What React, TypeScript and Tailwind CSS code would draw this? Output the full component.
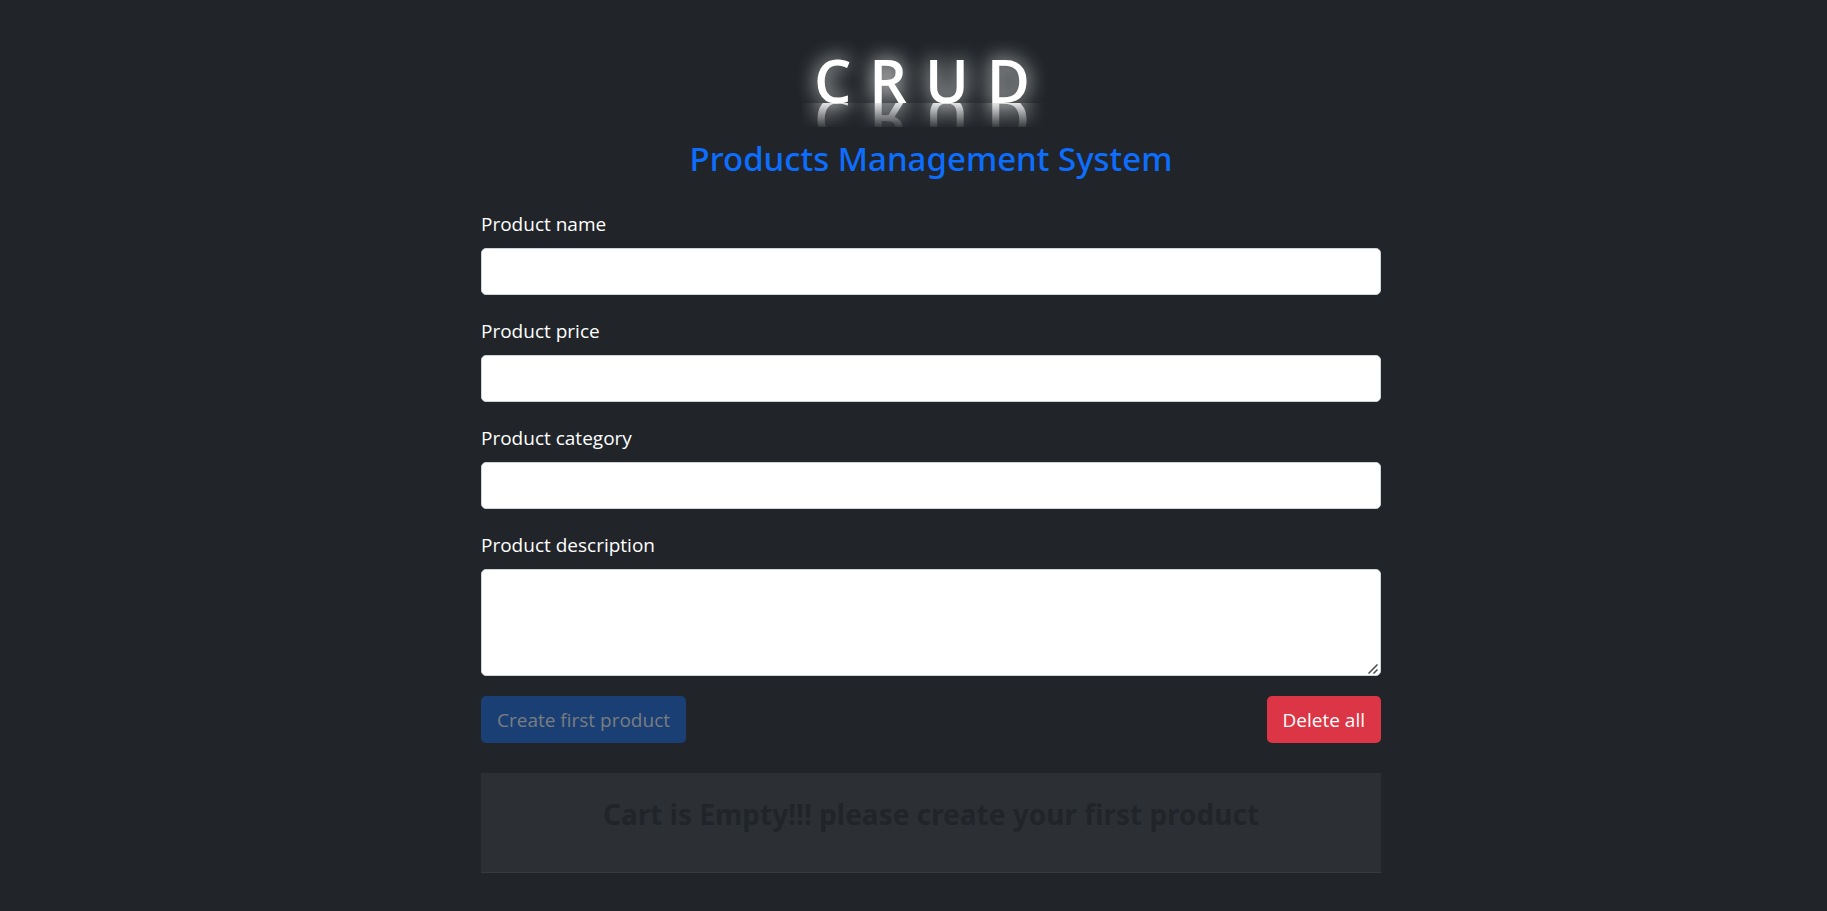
import { useState } from "react";

const fields = [
  { id: "name", label: "Product name" },
  { id: "price", label: "Product price" },
  { id: "category", label: "Product category" },
];

const labelClass = "mb-[10px] block leading-[28px]";
const controlClass = "block w-full rounded-[5px] border border-[#ced4da] bg-white px-4 text-[#212529] outline-none";
const buttonClass = "h-[47px] rounded-[5px] px-4 pt-[2px] text-white";

export default function App() {
  const [values, setValues] = useState<Record<string, string>>({});
  const update = (id: string, value: string) => setValues({ ...values, [id]: value });
  const complete = Boolean(values.name && values.price && values.category);

  return (
    <div className="min-h-screen bg-[#212529] pl-[35px] font-['Open_Sans','Noto_Sans',sans-serif] text-[19px] text-white">
      <main className="mx-auto w-full max-w-[900px] pt-[38px] pb-[38px]">
        <header className="flex flex-col items-center text-center">
          <h1 className="h-[60px] px-3 text-[59px] leading-[84px] font-semibold tracking-[18px] [text-shadow:0_0_20px_#ffffff] [-webkit-box-reflect:below_5px_linear-gradient(transparent_60%,rgba(255,255,255,0.1)_60%,rgba(255,255,255,0.85))]">
            CRUD
          </h1>
          <h2 className="mt-[39px] font-['Noto_Sans','Open_Sans',sans-serif] text-[33px] leading-[43px] font-medium text-[#0d6efd]">
            Products Management System
          </h2>
        </header>

        <form className="mt-[30px]" onSubmit={(event) => event.preventDefault()}>
          {fields.map(({ id, label }) => (
            <div key={id} className="mb-[22px]">
              <label htmlFor={id} className={labelClass}>
                {label}
              </label>
              <input
                id={id}
                type="text"
                value={values[id] ?? ""}
                onChange={(event) => update(id, event.target.value)}
                className={`${controlClass} h-[47px]`}
              />
            </div>
          ))}
          <div className="mb-5">
            <label htmlFor="description" className={labelClass}>
              Product description
            </label>
            <div className="relative">
              <textarea
                id="description"
                value={values.description ?? ""}
                onChange={(event) => update("description", event.target.value)}
                className={`${controlClass} h-[107px] resize-y py-2 [&::-webkit-resizer]:bg-transparent`}
              />
              <svg
                className="pointer-events-none absolute right-[3px] bottom-[2px] h-[10px] w-[10px]"
                viewBox="0 0 10 10"
                stroke="#4b4b4b"
                strokeWidth="1.5"
                aria-hidden="true"
              >
                <path d="M0.5 9.5 9.5 0.5M5.5 9.5 9.5 5.5" />
              </svg>
            </div>
          </div>
          <div className="flex justify-between">
            <button
              type="submit"
              disabled={!complete}
              className={`${buttonClass} bg-[#0d6efd] disabled:bg-[#1a3f75] disabled:text-[#7a7d80]`}
            >
              Create first product
            </button>
            <button type="button" onClick={() => setValues({})} className={`${buttonClass} bg-[#dc3545]`}>
              Delete all
            </button>
          </div>
        </form>

        <section className="mt-[30px] h-[100px] border-b border-[#373b3e] bg-[#2c3034] pt-[20px] text-center">
          <p className="font-['Noto_Sans','Open_Sans',sans-serif] text-[28px] leading-[42px] font-bold text-[#212529]">
            Cart is Empty!!! please create your first product
          </p>
        </section>
      </main>
    </div>
  );
}
